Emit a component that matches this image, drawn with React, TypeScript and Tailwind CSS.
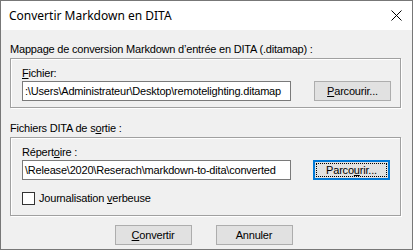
import React from 'react'

const ui = { fontFamily: '"Liberation Sans", Arial, sans-serif' }
const title = { fontFamily: '"Noto Sans", "Open Sans", sans-serif' }

function GroupBox({ className, children }: { className: string; children: React.ReactNode }) {
  return (
    <div className={`border border-[#a0a0a0] shadow-[inset_1px_1px_0_#ffffff,1px_1px_0_#ffffff] ${className}`}>
      {children}
    </div>
  )
}

function PathBox({ text }: { text: string }) {
  return (
    <div className="w-[269px] h-[20px] border border-[#7a7a7a] bg-white flex items-center pl-[2px] overflow-hidden whitespace-nowrap text-[11px] text-black">
      {text}
    </div>
  )
}

function WinButton({ children, focused, className = '' }: { children: React.ReactNode; focused?: boolean; className?: string }) {
  return (
    <div
      className={`w-[77px] h-[20px] flex items-center justify-center text-[11px] text-black bg-[#e1e1e1] ${
        focused ? 'border-2 border-[#0078d7] p-[1px]' : 'border border-[#adadad]'
      } ${className}`}
    >
      {focused ? (
        <div className="w-full h-full border border-dotted border-black flex items-center justify-center">{children}</div>
      ) : (
        children
      )}
    </div>
  )
}

export default function App() {
  return (
    <div className="w-[413px] h-[250px] border border-[#777777] flex flex-col bg-[#f0f0f0] text-black tracking-[-0.2px]" style={ui}>
      <div className="h-[29px] bg-white flex items-center justify-between pl-[8px] pr-[9px] tracking-normal">
        <span className="text-[12px] text-black" style={title}>Convertir Markdown en DITA</span>
        <svg width="11" height="11" viewBox="0 0 11 11" className="mr-[1px]">
          <path d="M0.5 0.5 L10.5 10.5 M10.5 0.5 L0.5 10.5" stroke="#000" strokeWidth="1" />
        </svg>
      </div>

      <div className="flex-1 flex flex-col px-[9px] pt-[12px] text-[11px]">
        <div className="h-[15px] leading-[15px]">Mappage de conversion Markdown d’entrée en DITA (.ditamap) :</div>
        <GroupBox className="mt-[1px] w-[391px] h-[50px] flex flex-col pl-[11px] pt-[7px]">
          <div className="h-[14px] leading-[14px]"><u>F</u>ichier:</div>
          <div className="mt-[1px] flex items-center">
            <PathBox text=":\Users\Administrateur\Desktop\remotelighting.ditamap" />
            <WinButton className="ml-[23px]"><span><u>P</u>arcourir...</span></WinButton>
          </div>
        </GroupBox>

        <div className="mt-[13px] h-[15px] leading-[15px]">Fichiers DITA de s<u>o</u>rtie :</div>
        <GroupBox className="mt-[1px] w-[391px] h-[79px] flex flex-col pl-[11px] pt-[7px]">
          <div className="h-[14px] leading-[14px]">Répert<u>o</u>ire :</div>
          <div className="mt-[1px] flex items-center">
            <PathBox text="\Release\2020\Reserach\markdown-to-dita\converted" />
            <WinButton focused className="ml-[22px]"><span>Parco<u>u</u>rir...</span></WinButton>
          </div>
          <div className="mt-[10px] flex items-center gap-[4px]">
            <div className="w-[13px] h-[13px] border border-[#333333] bg-white" />
            <span>Journalisation <u>v</u>erbeuse</span>
          </div>
        </GroupBox>

        <div className="mt-[9px] flex justify-center gap-[24px] pr-[6px]">
          <WinButton><span><u>C</u>onvertir</span></WinButton>
          <WinButton>Annuler</WinButton>
        </div>
      </div>
    </div>
  )
}
